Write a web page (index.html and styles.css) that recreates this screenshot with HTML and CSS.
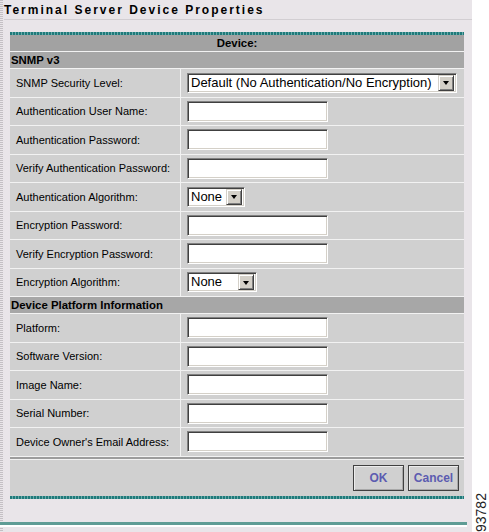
FILE: index.html
```html
<!DOCTYPE html>
<html>
<head>
<meta charset="utf-8">
<title>Terminal Server Device Properties</title>
<link rel="stylesheet" href="styles.css">
</head>
<body>
<div class="page">
  <div class="title">Terminal Server Device Properties</div>
  <div class="panel">
    <div class="teal"></div>
    <div class="grid">
      <div class="hdr">Device:</div>
      <div class="sec">SNMP v3</div>

      <div class="lbl">SNMP Security Level:</div>
      <div class="fld"><div class="select w-snmp"><span class="val">Default (No Authentication/No Encryption)</span><span class="btn"><span class="tri"></span></span></div></div>

      <div class="lbl">Authentication User Name:</div>
      <div class="fld"><div class="input"></div></div>

      <div class="lbl">Authentication Password:</div>
      <div class="fld"><div class="input"></div></div>

      <div class="lbl">Verify Authentication Password:</div>
      <div class="fld"><div class="input"></div></div>

      <div class="lbl">Authentication Algorithm:</div>
      <div class="fld"><div class="select w-auth"><span class="val">None</span><span class="btn"><span class="tri"></span></span></div></div>

      <div class="lbl">Encryption Password:</div>
      <div class="fld"><div class="input"></div></div>

      <div class="lbl">Verify Encryption Password:</div>
      <div class="fld"><div class="input"></div></div>

      <div class="lbl">Encryption Algorithm:</div>
      <div class="fld"><div class="select w-enc"><span class="val">None</span><span class="btn"><span class="tri"></span></span></div></div>

      <div class="sec">Device Platform Information</div>

      <div class="lbl">Platform:</div>
      <div class="fld"><div class="input"></div></div>

      <div class="lbl">Software Version:</div>
      <div class="fld"><div class="input"></div></div>

      <div class="lbl">Image Name:</div>
      <div class="fld"><div class="input"></div></div>

      <div class="lbl">Serial Number:</div>
      <div class="fld"><div class="input"></div></div>

      <div class="lbl">Device Owner's Email Address:</div>
      <div class="fld"><div class="input"></div></div>
    </div>
    <div class="divider"></div>
    <div class="actions">
      <div class="button">OK</div>
      <div class="button">Cancel</div>
    </div>
    <div class="teal"></div>
  </div>
  <div class="footline"></div>
</div>
<div class="figno">93782</div>
</body>
</html>
```
FILE: styles.css
```css
html, body {
  margin: 0;
  padding: 0;
  background: #ffffff;
  font-family: "Liberation Sans", Arial, sans-serif;
  color: #000;
}

.page {
  width: 472px;
  height: 532px;
  background-color: #e9e5e9;
  background-image: repeating-linear-gradient(to bottom, #c4c0c4 0 1px, #e9e5e9 1px 2px);
  background-size: 3px 100%;
  background-repeat: no-repeat;
  overflow: hidden;
}

.title {
  margin-left: 4px;
  padding-top: 3px;
  height: 16px;
  line-height: 14px;
  font-size: 12px;
  font-weight: bold;
  letter-spacing: 2px;
  border-bottom: 1px solid #d2ced2;
}

.panel {
  margin: 12px 0 0 10px;
  width: 454px;
}

.teal {
  height: 3px;
  background: repeating-linear-gradient(90deg, #1f7a7a 0 2px, #6aabab 2px 3px);
}

.grid {
  display: grid;
  grid-template-columns: 170px 1fr;
  gap: 1px;
  background: #f2f2f2;
  border-bottom: 1px solid #f2f2f2;
}

.hdr, .sec {
  grid-column: 1 / 3;
  font-size: 11.4px;
  font-weight: bold;
  line-height: 16px;
  height: 16px;
}

.hdr {
  text-align: center;
  background: #a2a2a2;
}

.sec {
  padding-left: 1px;
  background: #a7a7a7;
}

.lbl, .fld {
  height: 27.5px;
  background: #d0d0d0;
  display: flex;
  align-items: center;
}

.lbl {
  padding-left: 6px;
  font-size: 11px;
}

.fld {
  padding-left: 6px;
}

.input {
  box-sizing: border-box;
  width: 141px;
  height: 21px;
  background: #fff;
  border: 1px solid;
  border-color: #808080 #ffffff #ffffff #808080;
  box-shadow: inset 1px 1px 0 #404040, inset -1px -1px 0 #d4d0c8;
}

.select {
  box-sizing: border-box;
  height: 20px;
  background: #fff;
  border: 1px solid;
  border-color: #808080 #ffffff #ffffff #808080;
  box-shadow: inset 1px 1px 0 #404040, inset -1px -1px 0 #d4d0c8;
  display: flex;
  align-items: center;
  justify-content: space-between;
  padding: 0 2px 0 3px;
}

.w-snmp { width: 270px; }
.w-auth { width: 58px; }
.w-enc { width: 70px; }

.val {
  font-size: 13px;
  line-height: 16px;
  white-space: nowrap;
}

.btn {
  box-sizing: border-box;
  width: 16px;
  height: 16px;
  background: #d4d0c8;
  border: 1px solid;
  border-color: #d4d0c8 #404040 #404040 #d4d0c8;
  box-shadow: inset 1px 1px 0 #ffffff, inset -1px -1px 0 #808080;
  display: flex;
  align-items: center;
  justify-content: center;
}

.tri {
  width: 0;
  height: 0;
  border-left: 3.5px solid transparent;
  border-right: 3.5px solid transparent;
  border-top: 4px solid #000;
  margin-top: 1px;
}

.divider {
  height: 2px;
  background: #9c9c9c;
  border-bottom: 1px solid #f2f2f2;
}

.actions {
  height: 36px;
  box-sizing: border-box;
  background: #d0d0d0;
  display: flex;
  justify-content: flex-end;
  gap: 4px;
  padding: 5px 5px 0 0;
}

.button {
  box-sizing: border-box;
  width: 51px;
  height: 26px;
  border: 1px solid #404040;
  box-shadow: inset 1px 1px 0 #ececec, inset -1px -1px 0 #a8a8a8;
  background: #d0d0d0;
  color: #5c5cb0;
  font-size: 12px;
  font-weight: bold;
  display: flex;
  align-items: center;
  justify-content: center;
}

.footline {
  margin-top: 23px;
  width: 467px;
  height: 3px;
  background: #5f9c95;
  border-bottom: 2px solid #ffffff;
}

.figno {
  position: absolute;
  left: 474px;
  top: 490px;
  width: 14px;
  height: 42px;
  writing-mode: vertical-rl;
  transform: rotate(180deg);
  font-size: 14px;
  line-height: 14px;
  color: #222;
  white-space: nowrap;
}
```
